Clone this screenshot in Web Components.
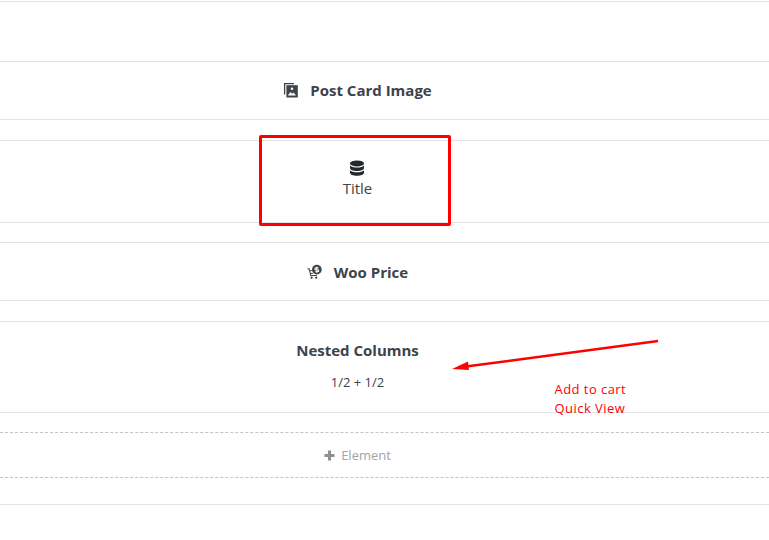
<!DOCTYPE html>
<html>
<head>
<meta charset="utf-8">
<title>Builder</title>
<style>
  html, body { margin: 0; padding: 0; background: #fff; height: 100%; overflow: hidden; }
  body { font-family: "Open Sans", sans-serif; color: #3c434a; position: relative; }
</style>
</head>
<body>
<builder-canvas>
  <builder-row style="--h:59px; --mt:0">
    <builder-element label="Post Card Image" bold gap="12px">
      <svg slot="icon" width="15" height="16" viewBox="0 0 15 16"><path fill="none" stroke="#3c434a" stroke-width="1.300" d="M1.600 12.500V1.600H11"/><rect x="3.400" y="3.200" width="11.400" height="12.300" fill="#3c434a"/><circle cx="9" cy="6.800" r="1.300" fill="#fff"/><path fill="#fff" d="M4.800 13.500l2.600-3.400 1.600 1.600 1.600-1.200 2.400 3z"/></svg>
    </builder-element>
  </builder-row>
  <builder-row style="--h:83px; --mt:20px">
    <builder-element label="Title" stacked>
      <svg slot="icon" width="14" height="16" viewBox="0 0 14 16"><ellipse cx="7" cy="3.400" rx="7" ry="3" fill="#23282d"/><path fill="#23282d" d="M0 5.400c1.400 1.500 4 2.100 7 2.100s5.600-.6 7-2.100V8c0 1.700-3.100 3-7 3S0 9.700 0 8z"/><path fill="#23282d" d="M0 10.200c1.400 1.500 4 2.100 7 2.100s5.600-.6 7-2.100v2.500c0 1.700-3.100 3-7 3s-7-1.300-7-3z"/></svg>
    </builder-element>
  </builder-row>
  <builder-row style="--h:59px; --mt:19px">
    <builder-element label="Woo Price" bold gap="12px" style="margin-top:1px">
      <svg slot="icon" width="15" height="16" viewBox="0 0 16 16"><path fill="none" stroke="#3c434a" stroke-width="1.100" d="M.5 4.500h1.800l1.700 7.200h6.500"/><path fill="none" stroke="#3c434a" stroke-width="1" d="M2.800 6.500h2.500M3.300 9.500h3"/><circle cx="4.800" cy="14" r="1.200" fill="#3c434a"/><circle cx="9.800" cy="14" r="1.200" fill="#3c434a"/><circle cx="10.500" cy="5.500" r="5.200" fill="#3c434a"/><path fill="none" stroke="#fff" stroke-width="1.200" d="M12.300 3.500h-2.800a1 1 0 0 0 0 2.100h1.900a1 1 0 0 1 0 2.100H8.600M10.500 2.300v6.400"/></svg>
    </builder-element>
  </builder-row>
  <builder-row style="--h:92px; --mt:20px">
    <nested-block title-text="Nested Columns" sub="1/2 + 1/2"></nested-block>
  </builder-row>
  <builder-row dashed style="--h:46px; --mt:19px">
    <add-element></add-element>
  </builder-row>
</builder-canvas>
<red-notes></red-notes>

<script>
class BuilderCanvas extends HTMLElement {
  constructor() {
    super();
    this.attachShadow({mode: 'open'}).innerHTML = `
      <style>
        :host {
          display: block;
          margin-top: 1px;
          border-top: 1px solid #e2e2e2;
          padding-top: 59px;
        }
        .end {
          margin-top: 26px;
          border-top: 1px solid #e2e2e2;
        }
      </style>
      <slot></slot>
      <div class="end"></div>
    `;
  }
}

class BuilderRow extends HTMLElement {
  constructor() {
    super();
    this.attachShadow({mode: 'open'}).innerHTML = `
      <style>
        :host {
          display: flex;
          box-sizing: border-box;
          height: var(--h);
          margin-top: var(--mt);
          border-top: 1px solid #e2e2e2;
          border-bottom: 1px solid #e2e2e2;
          align-items: center;
          justify-content: center;
          padding-right: 54px;
        }
        :host([dashed]) {
          border-top: 1px dashed #c4c4c4;
          border-bottom: 1px dashed #c4c4c4;
        }
      </style>
      <slot></slot>
    `;
  }
}

class BuilderElement extends HTMLElement {
  constructor() {
    super();
    this.attachShadow({mode: 'open'});
  }

  connectedCallback() {
    const gap = this.getAttribute('gap') || '0';
    this.shadowRoot.innerHTML = `
      <style>
        :host {
          display: flex;
          align-items: center;
          gap: ${gap};
          font-size: 15px;
          color: #3c434a;
        }
        :host([bold]) {
          font-weight: 700;
          margin-top: -1px;
        }
        :host([stacked]) {
          flex-direction: column;
          margin-top: -5px;
        }
        .icon { display: flex; }
        :host([stacked]) .icon { margin-bottom: 2px; }
      </style>
      <span class="icon"><slot name="icon"></slot></span>
      <span>${this.getAttribute('label')}</span>
    `;
  }
}

class NestedBlock extends HTMLElement {
  constructor() {
    super();
    this.attachShadow({mode: 'open'});
  }

  connectedCallback() {
    this.shadowRoot.innerHTML = `
      <style>
        :host {
          display: flex;
          flex-direction: column;
          align-items: center;
          gap: 13px;
          color: #3c434a;
          margin-top: -4px;
        }
        h4 { margin: 0; font-size: 15px; font-weight: 700; line-height: 20px; }
        p { margin: 0; font-size: 13px; line-height: 18px; }
      </style>
      <h4>${this.getAttribute('title-text')}</h4>
      <p>${this.getAttribute('sub')}</p>
    `;
  }
}

class AddElement extends HTMLElement {
  constructor() {
    super();
    this.attachShadow({mode: 'open'}).innerHTML = `
      <style>
        :host {
          display: flex;
          align-items: center;
          gap: 6px;
          font-size: 13px;
          color: #a3a3a3;
        }
        svg { display: block; }
      </style>
      <svg width="11" height="11" viewBox="0 0 11 11"><path fill="#8f8f8f" d="M4 .5h3V4h3.500v3H7v3.500H4V7H.5V4H4z"/></svg>
      <span>Element</span>
    `;
  }
}

class RedNotes extends HTMLElement {
  constructor() {
    super();
    this.attachShadow({mode: 'open'}).innerHTML = `
      <style>
        :host { display: block; position: absolute; inset: 0; pointer-events: none; }
        .box {
          position: absolute;
          left: 259px;
          top: 135px;
          width: 192px;
          height: 91px;
          box-sizing: border-box;
          border: 3px solid #f00;
          border-radius: 2px;
        }
        svg { position: absolute; left: 0; top: 0; }
        .note {
          position: absolute;
          left: 554.500px;
          top: 380px;
          font-size: 13px;
          line-height: 19px;
          color: #f00;
          letter-spacing: .45px;
        }
      </style>
      <div class="box"></div>
      <svg width="769" height="540" viewBox="0 0 769 540">
        <path d="M658 341L466 366.500" stroke="#f00" stroke-width="2.500" fill="none"/>
        <path d="M452 369L468 361.500 469 370z" fill="#f00"/>
      </svg>
      <div class="note">Add to cart<br>Quick View</div>
    `;
  }
}

customElements.define('builder-canvas', BuilderCanvas);
customElements.define('builder-row', BuilderRow);
customElements.define('builder-element', BuilderElement);
customElements.define('nested-block', NestedBlock);
customElements.define('add-element', AddElement);
customElements.define('red-notes', RedNotes);
</script>
</body>
</html>
